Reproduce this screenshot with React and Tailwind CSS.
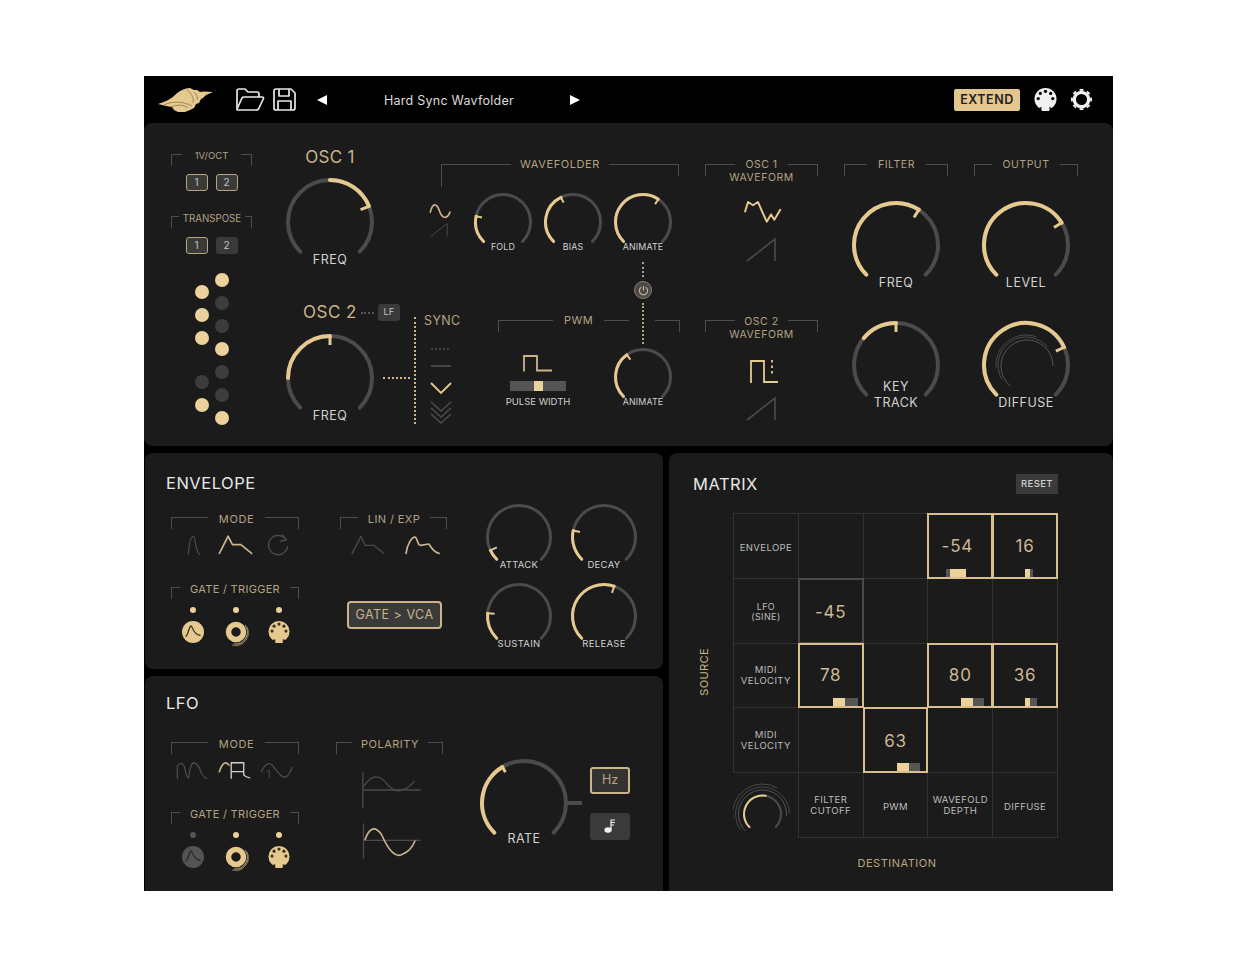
import React from "react";

const GOLD = "#e6c98f";
const TAN = "#c9b48c";
const TRACK = "#4b4b4b";

const polar = (c, r, deg) => {
  const a = (deg * Math.PI) / 180;
  return [c + r * Math.sin(a), c - r * Math.cos(a)];
};

const arc = (c, r, from, to) => {
  const [x1, y1] = polar(c, r, from);
  const [x2, y2] = polar(c, r, to);
  return `M${x1} ${y1} A${r} ${r} 0 ${to - from > 180 ? 1 : 0} 1 ${x2} ${y2}`;
};

function Knob({ r, from = -135, to, sw = 3, tick = 7, label, labelClass, children }) {
  const c = r + 2;
  const line = r - sw / 2;
  const [tx1, ty1] = polar(c, line, to);
  const [tx2, ty2] = polar(c, line - tick, to);
  return (
    <div className="relative shrink-0" style={{ width: c * 2, height: c * 2 }}>
      <svg width={c * 2} height={c * 2} fill="none" className="block">
        <path d={arc(c, line, -135, 135)} stroke={TRACK} strokeWidth={sw} strokeLinecap="round" />
        <path d={arc(c, line, from, to)} stroke={GOLD} strokeWidth={sw} strokeLinecap="round" />
        <path d={`M${tx1} ${ty1} L${tx2} ${ty2}`} stroke={GOLD} strokeWidth={sw - 1} />
        {children && children(c)}
      </svg>
      <div className={`absolute left-0 right-0 text-center text-[#d2d2d2] ${labelClass}`}>{label}</div>
    </div>
  );
}

const bigLabel = "top-[77px] text-[12.5px] leading-[14px] tracking-[0.5px]";
const smallLabel = "top-[50px] text-[8.8px] leading-[12px] tracking-[0.2px]";
const midLabel = "top-[57px] text-[9.5px] leading-[12px] tracking-[0.3px]";

function Bracket({ className, lc, rc, label, textClass = "text-[10.5px] tracking-[0.5px]" }) {
  return (
    <div className={`flex h-[12px] items-start ${className}`}>
      <div className={`shrink-0 border-t-[1.5px] border-l-[1.5px] border-[#4d4d4d] ${lc}`} />
      <div className={`flex min-w-0 flex-1 flex-col items-center -mt-[5.5px] text-center leading-[13.5px] whitespace-nowrap text-[#b3a282] ${textClass}`}>
        {label}
      </div>
      <div className={`shrink-0 border-t-[1.5px] border-r-[1.5px] border-[#4d4d4d] ${rc}`} />
    </div>
  );
}

function Dot({ on }) {
  return <div className={`h-[14px] w-[14px] rounded-full ${on ? "bg-[#ecd19b]" : "bg-[#3d3d3d]"}`} />;
}

function SmallBtn({ on, children }) {
  return (
    <div
      className={`flex h-[17px] w-[22px] items-center justify-center rounded-[3px] bg-[#3a3a3a] text-[10px] text-[#c4c4c4] ${
        on ? "border-[1.5px] border-[#b9a680]" : ""
      }`}
    >
      {children}
    </div>
  );
}

function ZoomIcon({ box, w, h, color = TRACK, sw = 4, children }) {
  return (
    <svg width={w} height={h} viewBox={box} fill="none" stroke={color} strokeWidth={sw} strokeLinejoin="round" strokeLinecap="round" className="block shrink-0">
      {children}
    </svg>
  );
}

function Saw({ w = 30, h = 24 }) {
  return (
    <svg width={w} height={h} viewBox="0 0 30 24" fill="none" stroke={TRACK} strokeWidth="1.6" className="block">
      <path d="M1 23 L29 1 V23" strokeLinejoin="miter" />
    </svg>
  );
}

function Logo() {
  return (
    <svg width="55" height="24" viewBox="0 0 55 24" className="block shrink-0">
      <path
        d="M0 16 C6 14 12 12 17 7 C21 3 27 0 32 0 L36 2 L39 2 L42 4 L46 3.5 L55 4 L48 7 L45 10 L43 11 L41 15 L38 16 L36 20 L32 22 L27 24 L20 24 L16 22 L14 19 L8 18 Z"
        fill="#e6c98f"
      />
      <path d="M6 17 C14 13 24 13 34 18 M13 19 C20 16 26 17 30 20 M29 2 C34 6 36 10 35 15 M36 4 C39 7 40 9 39 12" fill="none" stroke="#8a7448" strokeWidth="0.8" />
    </svg>
  );
}

function FolderIcon() {
  return (
    <svg width="30" height="23" viewBox="0 0 30 23" fill="none" stroke="#e8e8e8" strokeWidth="1.7" strokeLinejoin="round" className="block shrink-0">
      <path d="M2 20 V3 Q2 1 4 1 H10 L13 4 H22 Q24 4 24 6 V9" />
      <path d="M2 21 L7 10 Q7.5 9 9 9 H27 Q29 9 28.3 11 L24 20 Q23.5 22 21 22 H3 Q1.5 22 2 21 Z" />
    </svg>
  );
}

function SaveIcon() {
  return (
    <svg width="23" height="23" viewBox="0 0 23 23" fill="none" stroke="#e8e8e8" strokeWidth="1.7" strokeLinejoin="round" className="block shrink-0">
      <path d="M3 1 H18 L22 5 V20 Q22 22 20 22 H3 Q1 22 1 20 V3 Q1 1 3 1 Z" />
      <path d="M6 1 V8 H16 V1 M5 22 V13 H18 V22" />
    </svg>
  );
}

function MidiIcon({ size = 23, color = "#f1f1f1", hole = "#000", notch = hole }) {
  const dots = [-90, -45, 0, 45, 90];
  return (
    <svg width={size} height={size} viewBox="0 0 24 24" className="block shrink-0">
      <circle cx="12" cy="11.5" r="11.5" fill={color} />
      <rect x="8" y="21" width="8" height="3" fill={color} />
      <path d="M5.5 21.5 L8 20.5 M18.5 21.5 L16 20.5" stroke={notch} strokeWidth="1.5" />
      {dots.map((d) => (
        <circle key={d} cx={12 + 7.6 * Math.sin((d * Math.PI) / 180)} cy={11 - 7.6 * Math.cos((d * Math.PI) / 180)} r="1.7" fill={hole} />
      ))}
    </svg>
  );
}

function GearIcon() {
  const teeth = [0, 45, 90, 135, 180, 225, 270, 315];
  return (
    <svg width="23" height="23" viewBox="0 0 24 24" fill="none" stroke="#f1f1f1" className="block shrink-0">
      <circle cx="12" cy="12" r="7.5" strokeWidth="3.4" />
      {teeth.map((t) => {
        const a = (t * Math.PI) / 180;
        return <path key={t} d={`M${12 + 9 * Math.sin(a)} ${12 - 9 * Math.cos(a)} L${12 + 11 * Math.sin(a)} ${12 - 11 * Math.cos(a)}`} strokeWidth="4" />;
      })}
    </svg>
  );
}

function EnvJack({ on = true }) {
  return (
    <svg width="22" height="22" viewBox="0 0 22 22" className="block">
      <circle cx="11" cy="11" r="11" fill={on ? GOLD : "#545454"} />
      <path d="M3.5 15.5 C6 15 7 5 9 5 C11 5 10 13 18.5 14.5" fill="none" stroke={on ? "#3b3120" : "#2a2a2a"} strokeWidth="1.3" />
    </svg>
  );
}

function RingJack() {
  return (
    <svg width="26" height="26" viewBox="0 0 26 26" fill="none" className="block -mr-[4px]">
      <circle cx="11" cy="11" r="7.5" stroke={GOLD} strokeWidth="5.5" />
      <path d="M20 4 A12 12 0 0 1 9 23" stroke="#b9a680" strokeWidth="1" />
      <path d="M22 6 A13 13 0 0 1 7 24" stroke="#8d7f63" strokeWidth="1" />
      <path d="M23.5 9 A14 14 0 0 1 12 25" stroke="#6a6250" strokeWidth="1" />
    </svg>
  );
}

function Jacks({ first = true }) {
  const led = (on) => <div className={`h-[6px] w-[6px] rounded-full ${on ? "bg-[#ecd19b]" : "bg-[#555555]"}`} />;
  return (
    <div className="mt-[8px] grid w-[129px] grid-cols-3">
      <div className="flex flex-col items-center gap-[8px]">
        {led(first)}
        <EnvJack on={first} />
      </div>
      <div className="flex flex-col items-center gap-[8px]">
        {led(true)}
        <RingJack />
      </div>
      <div className="flex flex-col items-center gap-[8px]">
        {led(true)}
        <MidiIcon size={22} color={GOLD} hole="#3b3120" notch="#1b1b1b" />
      </div>
    </div>
  );
}

const cells = [
  { label: "ENVELOPE", cls: "pt-[3px]" }, {}, {},
  { value: "-54", cls: "pr-[6px]", on: true, left: 17, dark: 4, gold: 16, darkFirst: true },
  { value: "16", on: true, left: 31, gold: 5, dark: 3 },
  { label: "LFO\n(SINE)", small: true, cls: "pt-[3px]" },
  { value: "-45", cls: "pt-[2px]", dim: true }, {}, {}, {},
  { label: "MIDI\nVELOCITY" },
  { value: "78", on: true, left: 33, gold: 12, dark: 13 },
  {},
  { value: "80", on: true, left: 32, gold: 12, dark: 11 },
  { value: "36", on: true, left: 31, gold: 5, dark: 7 },
  { label: "MIDI\nVELOCITY", cls: "-mt-[1px]" }, {},
  { value: "63", cls: "pt-[2px]", on: true, left: 32, gold: 12, dark: 11 },
  {}, {},
  { knob: true },
  { label: "FILTER\nCUTOFF" }, { label: "PWM", cls: "pt-[3px]" }, { label: "WAVEFOLD\nDEPTH" }, { label: "DIFFUSE", cls: "pt-[3px]" },
];

function MatrixCell({ cell }) {
  if (cell.knob) {
    return (
      <div className="relative -mr-px">
        <svg width="65" height="65" viewBox="0 0 65 65" fill="none" className="block">
          <g transform="translate(-7.5 5)">
            <path d={arc(37, 24, -135, 95)} stroke="#555555" strokeWidth="1" />
            <path d={arc(37, 27, -125, 88)} stroke="#484848" strokeWidth="1" />
            <path d={arc(37, 30, -100, 30)} stroke="#484848" strokeWidth="1" />
            <path d={arc(37, 18.5, -135, 135)} stroke={TRACK} strokeWidth="2" strokeLinecap="round" />
            <path d={arc(37, 18.5, -135, 10)} stroke={GOLD} strokeWidth="2" strokeLinecap="round" />
          </g>
        </svg>
      </div>
    );
  }
  const border = cell.on
    ? "z-10 border-2 border-[#d9bf8b]"
    : cell.dim
      ? "z-10 border-2 border-[#4a4a4a]"
      : "border-[1.5px] border-[#323232]";
  return (
    <div className={`relative -mr-px -mb-px flex items-center justify-center text-center ${border}`}>
      {cell.label && (
        <div className={`whitespace-pre-line text-[#bdbdbd] tracking-[0.4px] ${cell.cls || ""} ${cell.small ? "text-[9px] leading-[10px]" : "text-[9.5px] leading-[11px]"}`}>
          {cell.label}
        </div>
      )}
      {cell.value && <div className={`text-[17px] leading-[20px] tracking-[0.8px] text-[#cdb892] ${cell.cls || ""}`}>{cell.value}</div>}
      {cell.gold && (
        <div className="absolute bottom-0 flex h-[8px]" style={{ left: cell.left }}>
          {cell.darkFirst && <div className="bg-[#555555]" style={{ width: cell.dark }} />}
          <div className="bg-[#ecd19b]" style={{ width: cell.gold }} />
          {!cell.darkFirst && <div className="bg-[#555555]" style={{ width: cell.dark }} />}
        </div>
      )}
    </div>
  );
}

function TopPanel() {
  const col1 = [true, true, true, false, true];
  const col2 = [true, false, false, true, false, false, true];
  return (
    <div className="relative flex h-[323px] rounded-lg bg-[#1b1b1b] pl-[27px] pt-[31px]">
      {/* keyboard routing column */}
      <div className="w-[81px] shrink-0">
        <Bracket className="w-[81px]" lc="h-[12px] w-[11px]" rc="h-[12px] w-[11px]" label="1V/OCT" textClass="text-[9.5px]" />
        <div className="mt-[8px] flex gap-[8px] pl-[14.5px]">
          <SmallBtn on>1</SmallBtn>
          <SmallBtn on>2</SmallBtn>
        </div>
        <div className="mt-[25px]">
          <Bracket className="w-[81px]" lc="h-[12px] w-[8px]" rc="h-[12px] w-[7px]" label="TRANSPOSE" textClass="text-[9.7px] translate-y-px" />
        </div>
        <div className="mt-[9px] flex gap-[8px] pl-[14.5px]">
          <SmallBtn on>1</SmallBtn>
          <SmallBtn>2</SmallBtn>
        </div>
        <div className="ml-[24px] mt-[19px] flex gap-[6px]">
          <div className="mt-[12px] flex flex-col gap-[9px]">
            {col1.map((on, i) => (
              <div key={i} className={i === 3 ? "mt-[21px]" : ""}>
                <Dot on={on} />
              </div>
            ))}
          </div>
          <div className="flex flex-col gap-[9px]">
            {col2.map((on, i) => (
              <Dot key={i} on={on} />
            ))}
          </div>
        </div>
      </div>

      <div className="ml-[32px] -mt-[7px] flex flex-col">
        {/* upper row */}
        <div className="flex h-[153px]">
          <div className="w-[92px] shrink-0">
            <div className="text-center text-[17px] leading-[20px] tracking-[0.3px] text-[#c9b48c]">OSC 1</div>
            <div className="mt-[9px]">
              <Knob r={44} sw={4} tick={9} to={68} from={0} label="FREQ" labelClass={bigLabel} />
            </div>
          </div>

          <div className="ml-[53px] mt-[17px] w-[251px] shrink-0">
            <Bracket className="ml-[12px] w-[238px]" lc="h-[23px] w-[70px]" rc="h-[12px] w-[70px]" label="WAVEFOLDER" textClass="text-[11px] tracking-[0.6px] -translate-y-px" />
            <div className="mt-[15px] flex">
              <div className="flex w-[22px] shrink-0 flex-col gap-[3px] pt-[12px]">
                <ZoomIcon box="855 398 66 50" w={22} h={17} color={TAN} sw={5}>
                  <path d="M859 425 C866 395 878 398 886 420 C893 442 908 450 918 425" />
                </ZoomIcon>
                <Saw w={20} h={14} />
              </div>
              <div className="ml-[21px] flex gap-[8px]">
                <Knob r={29} to={-78} tick={6} label="FOLD" labelClass={smallLabel} />
                <Knob r={29} to={-26} tick={6} label="BIAS" labelClass={smallLabel} />
                <Knob r={29} to={34} tick={6} label="ANIMATE" labelClass={smallLabel} />
              </div>
            </div>
          </div>

          <div className="ml-[25px] mt-[17px] w-[113px] shrink-0">
            <Bracket className="w-[113px]" lc="h-[12px] w-[30px]" rc="h-[12px] w-[30px]" label={<>OSC 1<br />WAVEFORM</>} textClass="text-[10.5px] tracking-[0.5px] -translate-y-px" />
            <div className="ml-[38px] mt-[24px]">
              <ZoomIcon box="365 390 118 70" w={39} h={23} color={GOLD} sw={6}>
                <path d="M371 425 L380 396 L395 406 L410 396 L425 430 L437 456 L450 434 L460 450 L478 420" />
              </ZoomIcon>
            </div>
            <div className="ml-[41px] mt-[15px]">
              <Saw />
            </div>
          </div>

          <div className="ml-[26px] mt-[17px] w-[104px] shrink-0">
            <Bracket className="w-[104px]" lc="h-[12px] w-[23px]" rc="h-[12px] w-[22px]" label="FILTER" textClass="text-[10.5px] tracking-[0.5px] -translate-y-px" />
            <div className="mt-[23px] flex justify-center">
              <Knob r={44} sw={4} tick={9} to={33} label="FREQ" labelClass={bigLabel} />
            </div>
          </div>

          <div className="ml-[26px] mt-[17px] w-[104px] shrink-0">
            <Bracket className="w-[104px]" lc="h-[12px] w-[18px]" rc="h-[12px] w-[18px]" label="OUTPUT" textClass="text-[10.5px] tracking-[0.5px] -translate-y-px" />
            <div className="mt-[23px] flex justify-center">
              <Knob r={44} sw={4} tick={9} to={58} label="LEVEL" labelClass={bigLabel} />
            </div>
          </div>
        </div>

        {/* lower row */}
        <div className="flex">
          <div className="w-[126px] shrink-0">
            <div className="mt-[4px] flex h-[17px] items-center pl-[19px]">
              <div className="text-[17px] leading-[17px] tracking-[0.5px] text-[#c9b48c]">OSC 2</div>
              <div className="ml-[4px] w-[13px] border-t-2 border-dotted border-[#555555]" />
              <div className="ml-[4px] flex h-[17px] w-[22px] items-center justify-center rounded-[3px] bg-[#3a3a3a] text-[9.5px] text-[#c4c4c4]">LF</div>
            </div>
            <div className="mt-[11px] flex items-center">
              <Knob r={44} sw={4} tick={9} from={-90} to={0} label="FREQ" labelClass={bigLabel} />
              <div className="ml-[7px] w-[27px] border-t-2 border-dotted border-[#cdb68a]" />
            </div>
          </div>

          <div className="ml-[4px] mt-[17px] h-[107px] w-[2px] shrink-0 border-l-2 border-dotted border-[#cdb68a]" />

          <div className="ml-[8px] mt-[14px] w-[36px] shrink-0">
            <div className="text-[12.5px] leading-[14px] tracking-[0.4px] text-[#b3a282]">SYNC</div>
            <svg width="26" height="80" viewBox="0 0 26 80" fill="none" className="ml-[5px] mt-[17px] block">
              <path d="M2 4 H22" stroke="#4d4d4d" strokeWidth="1.5" strokeDasharray="2 2" />
              <path d="M2 21 H22" stroke="#555555" strokeWidth="1.5" />
              <path d="M2 38 L12 48 L22 38" stroke={GOLD} strokeWidth="1.8" />
              <path d="M2 57 L12 66 L22 57 M2 63 L12 72 L22 63 M2 69 L12 78 L22 69" stroke="#4d4d4d" strokeWidth="1.5" />
            </svg>
          </div>

          <div className="ml-[38px] mt-[20px] w-[182px] shrink-0">
            <div className="flex h-[12px] items-start">
              <div className="h-[12px] w-[55px] border-t-[1.5px] border-l-[1.5px] border-[#4d4d4d]" />
              <div className="-mt-[6.5px] w-[51px] text-center text-[11px] leading-[13.5px] tracking-[0.4px] text-[#b3a282]">PWM</div>
              <div className="w-[25px] border-t-[1.5px] border-[#4d4d4d]" />
              <div className="w-[26px]" />
              <div className="h-[12px] w-[25px] border-t-[1.5px] border-r-[1.5px] border-[#4d4d4d]" />
            </div>
            <div className="flex items-start">
              <div className="ml-[8px] mt-[23px] flex w-[64px] shrink-0 flex-col items-center">
                <svg width="30" height="17" viewBox="0 0 30 17" fill="none" stroke={TAN} strokeWidth="1.8" className="block">
                  <path d="M1 16.5 V1 H14 V15.5 H29" />
                </svg>
                <div className="mt-[9px] flex h-[10px] w-[56px] justify-center bg-[#555555]">
                  <div className="h-[10px] w-[9px] bg-[#ecd19b]" />
                </div>
                <div className="mt-[5px] whitespace-nowrap text-[9.5px] leading-[12px] text-[#d2d2d2]">PULSE WIDTH</div>
              </div>
              <div className="ml-[42px] mt-[14px]">
                <Knob r={29} to={-36} tick={6} label="ANIMATE" labelClass={smallLabel} />
              </div>
            </div>
          </div>

          <div className="ml-[25px] mt-[20px] w-[113px] shrink-0">
            <Bracket className="w-[113px]" lc="h-[12px] w-[30px]" rc="h-[12px] w-[30px]" label={<>OSC 2<br />WAVEFORM</>} />
            <svg width="30" height="25" viewBox="0 0 30 25" fill="none" stroke={GOLD} strokeWidth="1.8" className="ml-[44px] mt-[27px] block">
              <path d="M2 24 V2 H15 V23 H29" />
              <path d="M23 1 V17" strokeDasharray="2.5 3" />
            </svg>
            <div className="ml-[41px] mt-[13px]">
              <Saw />
            </div>
          </div>

          <div className="ml-[26px] mt-[19px] flex w-[104px] shrink-0 justify-center">
            <Knob
              r={44}
              sw={4}
              tick={9}
              from={-50}
              to={0}
              label={<>KEY<br />TRACK</>}
              labelClass="top-[60px] text-[12.5px] leading-[16px] tracking-[0.5px]"
            />
          </div>

          <div className="ml-[26px] mt-[19px] flex w-[104px] shrink-0 justify-center">
            <Knob r={44} sw={4} tick={9} to={65} label="DIFFUSE" labelClass={bigLabel}>
              {(c) => (
                <>
                  <path d={arc(c + 1, 26, -140, 90)} stroke="#555555" strokeWidth="1" />
                  <path d={arc(c, 28, -120, 50)} stroke="#4b4b4b" strokeWidth="1" />
                  <path d={arc(c, 30, -95, 20)} stroke="#4b4b4b" strokeWidth="1" />
                </>
              )}
            </Knob>
          </div>
        </div>
      </div>

      {/* dotted link from the wavefolder animate knob down to the pwm animate knob */}
      <div className="absolute left-[490px] top-[139px] flex w-[18px] flex-col items-center">
        <div className="h-[15px] border-l-2 border-dotted border-[#b3a282]" />
        <div className="my-[4px] flex h-[18px] w-[18px] items-center justify-center rounded-full border-[1.5px] border-[#8d7f63] bg-[#4a4a4a]">
          <svg width="11" height="11" viewBox="0 0 12 12" fill="none" stroke="#c9b48c" strokeWidth="1.2" className="block">
            <path d="M3.5 2.5 A4.5 4.5 0 1 0 8.5 2.5 M6 1 V6" />
          </svg>
        </div>
        <div className="h-[41px] border-l-2 border-dotted border-[#b3a282]" />
      </div>
    </div>
  );
}

function EnvelopePanel() {
  return (
    <div className="h-[216px] rounded-lg bg-[#1b1b1b] pl-[21px] pt-[20px]">
      <div className="text-[16.5px] leading-[20px] tracking-[0.5px] text-[#e8e8e8]">ENVELOPE</div>
      <div className="flex items-start">
        <div className="ml-[5px] mt-[24px] w-[129px] shrink-0">
          <Bracket className="w-[128px]" lc="h-[12px] w-[37px]" rc="h-[12px] w-[34px]" label="MODE" textClass="text-[11px] tracking-[0.6px] translate-y-px" />
          <div className="ml-[15px] mt-[5px] flex h-[22px] items-center">
            <ZoomIcon box="120 252 50 70" w={15} h={22} sw={4}>
              <path d="M128 318 C130 280 135 258 145 258 C152 258 148 300 165 318" />
            </ZoomIcon>
            <div className="ml-[17px]">
              <ZoomIcon box="222 262 104 58" w={35} h={20} color={TAN} sw={5}>
                <path d="M226 316 L252 265 L265 290 L290 290 L322 316" />
              </ZoomIcon>
            </div>
            <div className="ml-[14px]">
              <ZoomIcon box="368 255 64 64" w={22} h={22} sw={4}>
                <path d="M424 272 A28 28 0 1 0 428 292 M412 258 L425 272 L408 276" />
              </ZoomIcon>
            </div>
          </div>
          <div className="mt-[31px]">
            <Bracket className="w-[128px]" lc="h-[12px] w-[9px]" rc="h-[12px] w-[9px]" label="GATE / TRIGGER" textClass="text-[11px] tracking-[0.3px] translate-y-px" />
          </div>
          <Jacks />
        </div>

        <div className="ml-[40px] mt-[24px] w-[107px] shrink-0">
          <Bracket className="w-[107px]" lc="h-[12px] w-[18px]" rc="h-[12px] w-[17px]" label="LIN / EXP" textClass="text-[11px] tracking-[0.4px] translate-y-px" />
          <div className="ml-[11px] mt-[5px] flex h-[22px] items-center gap-[20px]">
            <ZoomIcon box="620 262 102 58" w={34} h={20} sw={4}>
              <path d="M623 317 L650 265 L662 292 L688 292 L718 316" />
            </ZoomIcon>
            <ZoomIcon box="784 262 104 58" w={35} h={20} color={TAN} sw={5}>
              <path d="M787 316 C790 290 805 265 815 268 C822 272 820 292 830 292 L855 288 C862 300 870 312 885 316" />
            </ZoomIcon>
          </div>
          <div className="ml-[7px] mt-[45px] flex h-[28px] w-[95px] items-center justify-center rounded-[4px] border-2 border-[#c9b48c] bg-[#3a3a3a] text-[12.5px] tracking-[0.5px] text-[#c9b48c]">
            GATE &gt; VCA
          </div>
        </div>

        <div className="ml-[37px] mt-[9px] grid grid-cols-[70px_70px] gap-x-[15px] gap-y-[9px]">
          <Knob r={33} to={-115} label="ATTACK" labelClass={midLabel} />
          <Knob r={33} to={-78} label="DECAY" labelClass={midLabel} />
          <Knob r={33} to={-85} label="SUSTAIN" labelClass={midLabel} />
          <Knob r={33} to={19} label="RELEASE" labelClass={midLabel} />
        </div>
      </div>
    </div>
  );
}

function LfoPanel() {
  return (
    <div className="h-[215px] rounded-lg rounded-b-none bg-[#1b1b1b] pl-[21px] pt-[17px]">
      <div className="text-[16.5px] leading-[20px] tracking-[0.5px] text-[#e8e8e8]">LFO</div>
      <div className="flex items-start">
        <div className="ml-[5px] mt-[29px] w-[129px] shrink-0">
          <Bracket className="w-[128px]" lc="h-[12px] w-[37px]" rc="h-[12px] w-[34px]" label="MODE" textClass="text-[11px] tracking-[0.6px] translate-y-px" />
          <div className="ml-[5px] mt-[6px] flex h-[20px] items-center">
            <ZoomIcon box="96 250 98 60" w={32} h={20} sw={4}>
              <path d="M100 306 L100 268 Q112 250 122 270 Q128 305 135 305 Q140 255 152 258 Q165 262 172 285 Q178 302 190 306" />
            </ZoomIcon>
            <div className="ml-[10px]">
              <ZoomIcon box="222 250 100 60" w={33} h={20} color={TAN} sw={5}>
                <path d="M226 285 Q240 245 255 265" />
                <path d="M262 305 V258 H300 V295 Q305 302 318 304 M262 285 H300" stroke="#d2d2d2" strokeWidth="4" />
              </ZoomIcon>
            </div>
            <div className="ml-[9px]">
              <ZoomIcon box="348 250 100 60" w={33} h={20} sw={4}>
                <path d="M352 285 Q370 250 385 265 Q400 285 410 295 Q430 315 445 272" />
                <path d="M370 285 L376 280 V302" strokeWidth="3" />
              </ZoomIcon>
            </div>
          </div>
          <div className="mt-[32px]">
            <Bracket className="w-[128px]" lc="h-[12px] w-[9px]" rc="h-[12px] w-[9px]" label="GATE / TRIGGER" textClass="text-[11px] tracking-[0.3px] translate-y-px" />
          </div>
          <Jacks first={false} />
        </div>

        <div className="ml-[36px] mt-[29px] w-[107px] shrink-0">
          <Bracket className="w-[107px]" lc="h-[12px] w-[16px]" rc="h-[12px] w-[15px]" label="POLARITY" textClass="text-[11px] tracking-[0.5px] translate-y-px" />
          <div className="ml-[25px] mt-[18px]">
            <ZoomIcon box="648 290 182 110" w={60} h={36} sw={4}>
              <path d="M653 293 V398 M653 345 H828" />
              <path d="M655 335 Q690 280 725 325 Q750 355 770 345 Q790 345 810 318" />
            </ZoomIcon>
          </div>
          <div className="ml-[25px] mt-[15px]">
            <ZoomIcon box="648 445 182 110" w={60} h={36} sw={4}>
              <path d="M655 448 V552 M655 498 H828" />
              <path d="M660 495 Q680 440 710 480 Q745 560 775 540 Q800 530 812 500" stroke={TAN} strokeWidth="5" />
            </ZoomIcon>
          </div>
        </div>

        <div className="ml-[35px] mt-[44px] flex items-center">
          <Knob r={44} sw={4} tick={6} to={-31} label="RATE" labelClass="top-[75px] text-[12.5px] leading-[14px] tracking-[0.5px]" />
          <div className="-ml-[2px] h-[4px] w-[14px] bg-[#4b4b4b]" />
          <div className="ml-[8px] flex flex-col gap-[19px]">
            <div className="flex h-[27px] w-[40px] items-center justify-center rounded-[3px] border-2 border-[#c9b48c] bg-[#333333] text-[12.5px] text-[#b9a680]">Hz</div>
            <div className="flex h-[27px] w-[40px] items-center justify-center rounded-[3px] bg-[#3a3a3a]">
              <svg width="12" height="14" viewBox="0 0 12 14" className="block">
                <ellipse cx="4" cy="11" rx="3.6" ry="2.8" fill="#f1f1f1" />
                <path d="M7 11 V1 H11 M7 3.5 H11 M7 6 H10" fill="none" stroke="#f1f1f1" strokeWidth="1.2" />
              </svg>
            </div>
          </div>
        </div>
      </div>
    </div>
  );
}

function MatrixPanel() {
  return (
    <div className="h-[438px] w-[444px] shrink-0 rounded-t-lg bg-[#1b1b1b] pt-[21px]">
      <div className="flex h-[20px] items-center justify-between pl-[24px] pr-[55px]">
        <div className="text-[16.5px] leading-[20px] tracking-[0.5px] text-[#e8e8e8]">MATRIX</div>
        <div className="flex h-[20px] w-[42px] items-center justify-center bg-[#3a3a3a] text-[9.5px] font-medium tracking-[0.4px] text-[#cfcfcf]">RESET</div>
      </div>
      <div className="mt-[19px] flex items-center pl-[28px]">
        <div className="-mt-[6px] w-[14px] rotate-180 text-center text-[11px] leading-[14px] tracking-[0.4px] text-[#c9b48c] [writing-mode:vertical-rl]">SOURCE</div>
        <div className="ml-[22px] grid w-[324px] grid-cols-[repeat(5,64.8px)] grid-rows-[repeat(5,64.8px)]">
          {cells.map((cell, i) => (
            <MatrixCell key={i} cell={cell} />
          ))}
        </div>
      </div>
      <div className="ml-[64px] mt-[19px] w-[328px] text-center text-[11px] leading-[14px] tracking-[0.5px] text-[#b9a680]">DESTINATION</div>
    </div>
  );
}

export default function App() {
  return (
    <div className="h-[966px] w-[1257px] bg-white pl-[144px] pt-[76px] font-['Inter','Noto_Sans',sans-serif]">
      <div className="flex h-[815px] w-[969px] flex-col bg-black">
        {/* header */}
        <div className="flex h-[47px] shrink-0 items-center pl-[14px] pr-[20px]">
          <Logo />
          <div className="ml-[22px]">
            <FolderIcon />
          </div>
          <div className="ml-[8px]">
            <SaveIcon />
          </div>
          <div className="ml-[21px] h-0 w-0 border-y-[5px] border-r-[10px] border-y-transparent border-r-white" />
          <div className="ml-[57px] w-[131px] whitespace-nowrap pt-[3px] text-[12.5px] tracking-[0.25px] text-[#dddddd]">Hard Sync Wavfolder</div>
          <div className="ml-[55px] h-0 w-0 border-y-[5px] border-l-[10px] border-y-transparent border-l-white" />
          <div className="ml-auto flex h-[22px] w-[66px] items-center justify-center rounded-[2px] bg-[#e3c78e] pt-px text-[12.5px] font-semibold tracking-[0.5px] text-[#222222]">EXTEND</div>
          <div className="ml-[14px]">
            <MidiIcon />
          </div>
          <div className="ml-[13px]">
            <GearIcon />
          </div>
        </div>

        <TopPanel />

        <div className="mt-[7px] flex gap-[6px] pl-px">
          <div className="flex w-[518px] shrink-0 flex-col gap-[7px]">
            <EnvelopePanel />
            <LfoPanel />
          </div>
          <MatrixPanel />
        </div>
      </div>
    </div>
  );
}
